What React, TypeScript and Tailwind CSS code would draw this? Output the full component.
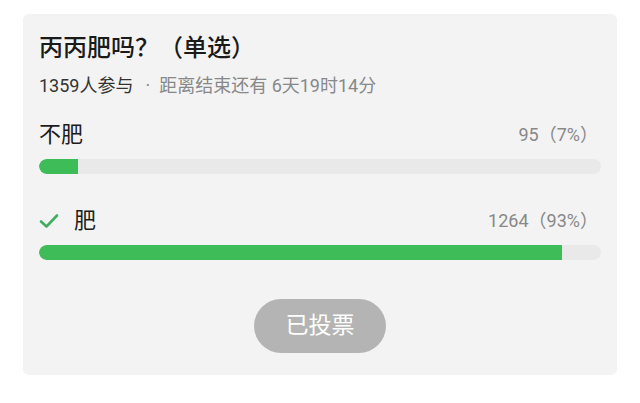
import React from "react";

const font = { fontFamily: 'Roboto, "Noto Sans CJK SC", "Noto Sans", sans-serif' };

function CheckIcon() {
  return (
    <svg width="20" height="16" viewBox="0 0 20 16" fill="none">
      <path d="M2 8.5 L7.5 13.5 L18 2.5" stroke="#3fae5e" strokeWidth="2.6" strokeLinecap="round" strokeLinejoin="round" />
    </svg>
  );
}

function Option({ label, count, pct, checked, gapTop }: { label: string; count: string; pct: number; checked?: boolean; gapTop: string }) {
  return (
    <div className={gapTop}>
      <div className="flex items-center justify-between h-[28px]">
        <div className="flex items-center">
          {checked && (
            <span className="mr-[15px] flex items-center">
              <CheckIcon />
            </span>
          )}
          <span className="text-[22px] leading-[28px] text-[#1c1c1c]">{label}</span>
        </div>
        <span className="text-[18px] leading-[28px] text-[#888888] pr-[3px]">{count}</span>
      </div>
      <div className="mt-[10px] h-[15px] w-full rounded-full bg-[#e9e9e9] overflow-hidden">
        <div className="h-full rounded-l-full bg-[#3dbc58]" style={{ width: `${pct}%` }} />
      </div>
    </div>
  );
}

export default function App() {
  return (
    <div className="w-[640px] h-[403px] bg-white pt-[14px]" style={font}>
      <div className="mx-[23px] h-[361px] rounded-[6px] bg-[#f3f3f3] px-[16px] pt-[19px]">
        <div className="text-[24px] leading-[30px] text-[#1a1a1a] font-medium">丙丙肥吗？（单选）</div>
        <div className="mt-[11px] flex items-center text-[18px] leading-[24px] text-[#888888]">
          <span className="text-[#333333]">1359人参与</span>
          <span className="ml-[12px] mr-[9px]">·</span>
          <span>距离结束还有 6天19时14分</span>
        </div>
        <Option label="不肥" count="95（7%）" pct={7} gapTop="mt-[23px]" />
        <Option label="肥" count="1264（93%）" pct={93} checked gapTop="mt-[33px]" />
        <div className="mt-[39px] flex justify-center">
          <div className="w-[132px] h-[54px] rounded-full bg-[#b4b4b4] flex items-center justify-center text-white text-[23px]">
            已投票
          </div>
        </div>
      </div>
    </div>
  );
}
